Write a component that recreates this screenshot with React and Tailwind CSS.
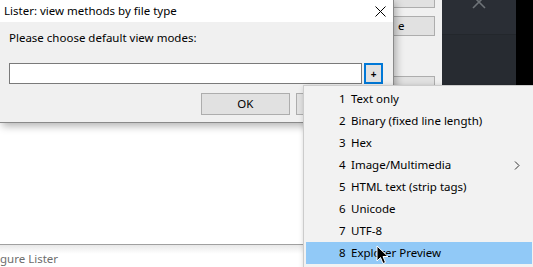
import React from "react";

const menuItems = [
  { n: "1", label: "Text only" },
  { n: "2", label: "Binary (fixed line length)" },
  { n: "3", label: "Hex" },
  { n: "4", label: "Image/Multimedia", sub: true },
  { n: "5", label: "HTML text (strip tags)" },
  { n: "6", label: "Unicode" },
  { n: "7", label: "UTF-8" },
  { n: "8", label: "Explorer Preview", active: true },
];

function Cursor() {
  return (
    <svg width="14" height="21" viewBox="0 0 14 21" className="absolute left-[376px] top-[245px]">
      <path d="M1 1 L1 16 L4.5 12.5 L7 18.5 L9.5 17.5 L7 11.5 L12 11.5 Z" fill="#000" stroke="#fff" strokeWidth="1" />
    </svg>
  );
}

export default function App() {
  return (
    <div
      className="relative w-[533px] h-[267px] overflow-hidden bg-white text-[11.5px] text-black"
      style={{ fontFamily: '"Noto Sans", "Segoe UI", sans-serif' }}
    >
      {/* background application */}
      <div className="flex flex-col h-full">
        <div className="flex flex-1">
          <div className="flex-1 bg-white" />
          <div className="w-[49px] bg-[#f0f0f0] flex flex-col pt-0 gap-[8px] pr-[7px]">
            <div className="h-[10px] -mt-[2px] bg-[#e1e1e1] border border-[#adadad]" />
            <div className="h-[20px] bg-[#e1e1e1] border border-[#adadad] flex items-center pl-[4px]">e</div>
            <div className="h-[20px] mt-[32px] bg-[#e1e1e1] border border-[#adadad]" />
          </div>
          <div className="w-[74px] bg-[#2a2e35] flex flex-col">
            <div className="h-[35px] border-b border-[#23272c] flex justify-center">
              <svg width="16" height="16" viewBox="0 0 16 16" className="-mt-[6px]">
                <path d="M2 2 L14 14 M14 2 L2 14" stroke="#6e7378" strokeWidth="1.6" />
              </svg>
            </div>
            <div className="flex-1 bg-[#272b31]" />
          </div>
          <div className="w-[17px] bg-black" />
        </div>
        <div className="h-[23px] border-t border-[#a0a0a0] bg-gradient-to-b from-[#e8e8e8] to-white to-40% flex items-center">
          <span className="text-[#6d6d6d] pt-[5px]">gure Lister</span>
          <span className="ml-[245px] text-[#c8c8c8] text-[11px] pt-[4px]">&gt;</span>
        </div>
      </div>

      {/* dialog */}
      <div className="absolute left-0 top-0 w-[394px] h-[123px] border-r border-b border-[#8a8a8a] bg-[#f0f0f0] flex flex-col shadow-[2px_3px_8px_rgba(0,0,0,0.3)]">
        <div className="h-[22px] bg-white flex items-center justify-between pl-[4px] pr-[7px]">
          <span>Lister: view methods by file type</span>
          <svg width="11" height="11" viewBox="0 0 11 11">
            <path d="M0.5 0.5 L10.5 10.5 M10.5 0.5 L0.5 10.5" stroke="#000" strokeWidth="1" />
          </svg>
        </div>
        <div className="flex flex-col px-[9px] pt-[6px]">
          <div className="h-[20px] flex items-center">Please choose default view modes:</div>
          <div className="flex mt-[15px] gap-[2px] items-center">
            <div className="w-[353px] h-[21px] bg-white border border-[#7a7a7a]" />
            <div className="w-[19px] h-[21px] border-2 border-[#0078d7] bg-[#e1e1e1] flex items-center justify-center text-[10px] leading-none font-bold">+</div>
          </div>
          <div className="flex mt-[9px] pl-[192px] gap-[6px]">
            <div className="w-[89px] h-[22px] bg-[#e1e1e1] border border-[#adadad] flex items-center justify-center">OK</div>
            <div className="w-[89px] h-[22px] bg-[#e1e1e1] border border-[#adadad]" />
          </div>
        </div>
      </div>

      {/* context menu */}
      <div className="absolute left-[303px] top-[85px] w-[235px] h-[185px] bg-[#f2f2f2] border border-[#cccccc] shadow-[2px_2px_6px_rgba(0,0,0,0.3)] pl-[2px] pr-[5px] pt-[2px] flex flex-col">
        {menuItems.map((it) => (
          <div
            key={it.n}
            className={`h-[22px] flex items-center pl-[33px] pr-[12px] ${it.active ? "bg-[#91c9f7]" : ""}`}
          >
            <span className="w-[12px]">{it.n}</span>
            <span className="flex-1">{it.label}</span>
            {it.sub && (
              <svg width="6" height="9" viewBox="0 0 6 9">
                <path d="M1 0.5 L5 4.5 L1 8.5" fill="none" stroke="#333" strokeWidth="1" />
              </svg>
            )}
          </div>
        ))}
      </div>

      <Cursor />
    </div>
  );
}
